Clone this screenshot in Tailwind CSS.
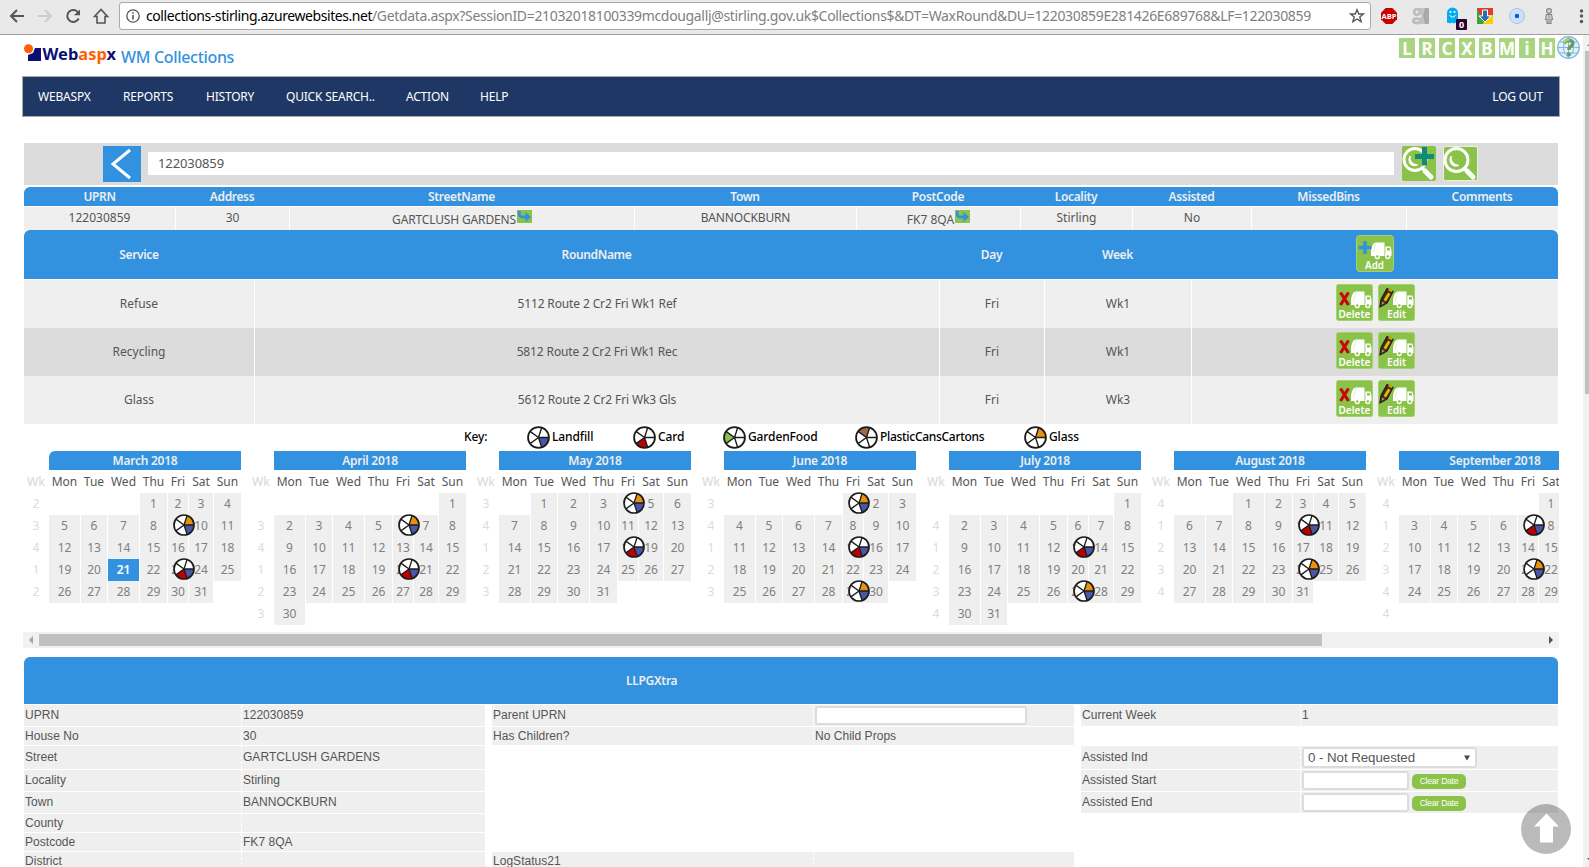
<!DOCTYPE html>
<html lang="en">
<head>
<meta charset="utf-8">
<title>WM Collections</title>
<script src="https://cdn.jsdelivr.net/npm/@tailwindcss/browser@4"></script>
</head>
<body class="w-[1589px] h-[867px] overflow-hidden bg-white text-[12px] text-[#555] font-['Noto_Sans',sans-serif] leading-none">
<svg width="0" height="0" class="absolute">
  <symbol id="truck" viewBox="0 0 21 18">
    <path d="M0 13V9C.5 4 2 1.500 4.500 .5H13.500V14H0Z" fill="#fff"/><path d="M14.300 4.500h5l1.200 4V14H14.300Z" fill="#fff"/><path d="M16 6h2.600l.7 2.500H16Z" fill="#8bc34a"/>
    <path d="M4.800 1.500L2.500 10" stroke="#c5e1a5" stroke-width=".6"/>
    <circle cx="6.300" cy="14.500" r="2" fill="#8bc34a" stroke="#fff" stroke-width="1.300"/><circle cx="16.800" cy="14.500" r="2" fill="#8bc34a" stroke="#fff" stroke-width="1.300"/>
  </symbol>
  <symbol id="delete" viewBox="0 0 37 37">
    <rect x=".5" y=".5" width="36" height="36" rx="2" fill="#8bc34a" stroke="#a5d271"/>
    <use href="#truck" x="15" y="7" width="21" height="18"/>
    <path d="M4.500 8.500L12.500 21M12.500 8.500L4.500 21" stroke="#c40808" stroke-width="3.200"/>
  </symbol>
  <symbol id="edit" viewBox="0 0 37 37">
    <rect x=".5" y=".5" width="36" height="36" rx="2" fill="#8bc34a" stroke="#a5d271"/>
    <use href="#truck" x="15" y="7" width="21" height="18"/>
    <path d="M9 4.500L15 7.500L9 19L2 23L3 15.500Z" fill="#3b2b0a" stroke="#222" stroke-width="1.200"/>
    <path d="M10 8.500L12.500 10L8 17.500L5.500 16Z" fill="#e8b413"/><path d="M10.500 5.500L14 7.300" stroke="#d89b10" stroke-width="2"/><path d="M4 17.500L7 19L3.500 21Z" fill="#c58a5a"/>
  </symbol>
  <symbol id="spokes" viewBox="0 0 22 22">
    <path d="M11 11H21M11 11L14.100 1.500M11 11L2.900 5.100M11 11L2.900 16.900M11 11L14.100 20.500" stroke="#1b1b1b" stroke-width="1.300"/>
    <circle cx="11" cy="11" r="10" fill="none" stroke="#1b1b1b" stroke-width="1.700"/>
  </symbol>
  <symbol id="p-blue" viewBox="0 0 22 22"><path d="M11 11H21A10 10 0 0 1 14.100 20.500Z" fill="#4a56a6"/></symbol>
  <symbol id="p-red" viewBox="0 0 22 22"><path d="M11 11L14.100 20.500A10 10 0 0 1 2.900 16.900Z" fill="#c00000"/></symbol>
  <symbol id="p-green" viewBox="0 0 22 22"><path d="M11 11L2.900 16.900A10 10 0 0 1 2.900 5.100Z" fill="#8bc34a"/></symbol>
  <symbol id="p-brown" viewBox="0 0 22 22"><path d="M11 11L2.900 5.100A10 10 0 0 1 14.100 1.500Z" fill="#a0694a"/></symbol>
  <symbol id="p-orange" viewBox="0 0 22 22"><path d="M11 11L14.100 1.500A10 10 0 0 1 21 11Z" fill="#e8920e"/></symbol>
  <symbol id="goto" viewBox="0 0 15 13"><rect width="15" height="13" fill="#8bc34a"/><path d="M2.300 1V4.500Q2.500 7 5.500 7H10" fill="none" stroke="#3292e0" stroke-width="2.800"/><path d="M8.500 2L14 7L8.500 12Z" fill="#3292e0"/></symbol>
</svg>

<!-- Browser toolbar -->
<header class="flex h-[35px] border-b border-[#9f9f9f] bg-[#e9e9e9]">
  <svg class="w-[119px] h-[34px] shrink-0" viewBox="0 0 119 34" fill="none" stroke="#555" stroke-width="2">
    <path d="M24 16H11.500M17 10L11 16L17 22"/>
    <path d="M38 16H50.500M45 10L51 16L45 22" stroke="#ccc"/>
    <path d="M78.500 13A6 6 0 1 0 78.700 18.500"/><path d="M80 9.500V15.300H74Z" fill="#555" stroke="none"/>
    <path d="M94.500 16.500L101 9.500L107.500 16.500H105V23H97V16.500Z" stroke-width="1.600"/>
  </svg>
  <div class="mt-[2px] flex h-[28px] w-[1252px] items-center rounded-[3px] border border-[#a9a9a9] bg-white">
    <svg class="ml-[6px] h-[14px] w-[14px] shrink-0" viewBox="0 0 14 14" fill="none" stroke="#555" stroke-width="1.300"><circle cx="7" cy="7" r="6.200"/><path d="M7 6v4.500M7 3.300v1.500" stroke-width="1.600"/></svg>
    <span class="ml-[6px] w-[226px] shrink-0 whitespace-nowrap text-[14px] tracking-[-0.43px] text-black">collections-stirling.azurewebsites.net</span>
    <span class="w-[977px] shrink-0 whitespace-nowrap text-[14px] tracking-[-0.34px] text-[#808080]">/Getdata.aspx?SessionID=21032018100339mcdougallj@stirling.gov.uk$Collections$&amp;DT=WaxRound&amp;DU=122030859E281426E689768&amp;LF=122030859</span>
    <svg class="h-[16px] w-[16px] shrink-0" viewBox="0 0 16 16" fill="none" stroke="#555" stroke-width="1.400"><path d="M8 1.800L9.800 6H14.400L10.800 9L12.100 13.600L8 11L3.900 13.600L5.200 9L1.600 6H6.200Z"/></svg>
  </div>
  <svg class="h-[34px] w-[218px] shrink-0" viewBox="1371 0 218 34">
    <path d="M1385.700 8h6.600l4.700 4.700v6.600l-4.700 4.700h-6.600l-4.700-4.700v-6.600Z" fill="#c70000"/><text x="1389" y="18.800" text-anchor="middle" font-size="7.500" font-weight="700" font-family="Open Sans" fill="#fff">ABP</text>
    <path d="M1421 8h7a1 1 0 0 1 1 1v14a1 1 0 0 1-1 1h-7Z" fill="#a9a9a9"/><path d="M1421 8h4l-2 8 2 8h-4Z" fill="#c4c4c4"/><g fill="none" stroke="#bdbdbd" stroke-width="2.800"><circle cx="1417" cy="12" r="2.800"/><ellipse cx="1417" cy="20.800" rx="3.800" ry="2.200"/></g><path d="M1418 9h3.500" stroke="#bdbdbd" stroke-width="1.800"/>
    <path d="M1447 23V13a5.500 5.500 0 0 1 11 0v8l1 2-3-.5-2 1-2-1-2 1-2-1Z" fill="#00aef0"/><circle cx="1450.500" cy="12" r="1.100" fill="#fff"/><circle cx="1454.500" cy="12" r="1.100" fill="#fff"/><path d="M1449.500 15a3.200 3.200 0 0 0 6 0" stroke="#fff" fill="none"/>
    <rect x="1456" y="19" width="11" height="11" rx="1" fill="#300030"/><text x="1461.500" y="28.300" text-anchor="middle" font-size="9" font-weight="700" font-family="Noto Sans" fill="#fff">0</text>
    <rect x="1477" y="8" width="16" height="16" fill="#ffce00"/><path d="M1477 24V8h1l8 8-3 8Z" fill="#3aa53c"/><path d="M1477 8h16v7h-13Z" fill="#e23b30"/><path d="M1482.500 10h5v6h3.500l-6 6-6-6h3.500Z" fill="#2d6cb5" stroke="#fff" stroke-width="1"/>
    <circle cx="1517" cy="16" r="7.500" fill="#cfdffa" stroke="#a8c3f2"/><circle cx="1517" cy="16" r="2.200" fill="#0a5bc4"/>
    <g fill="#d4d4d4" stroke="#888" stroke-width="1.200"><circle cx="1549" cy="11" r="2.400"/><path d="M1546.500 14.500h5l1 5h-1.500v4h-4v-4h-1.500Z"/></g><path d="M1549 15v8" stroke="#888"/>
    <g fill="#555"><circle cx="1581.500" cy="11" r="1.700"/><circle cx="1581.500" cy="16" r="1.700"/><circle cx="1581.500" cy="21.500" r="1.700"/></g>
  </svg>
</header>

<div class="flex h-[832px]">
<main class="w-[1583px] shrink-0 overflow-hidden">
  <!-- Branding and shortcut letters -->
  <div class="flex h-[41px] pl-[24px]">
    <svg class="mt-[9px] h-[22px] w-[97px] shrink-0" viewBox="0 0 97 22">
      <path d="M4 17V11L9 9L11 4H17V17Z" fill="#0a0f72"/><circle cx="4.500" cy="4.700" r="4.500" fill="#ff5f05"/>
      <text x="18.500" y="15.500" font-family="Noto Sans" font-weight="700" font-size="16.500" fill="#0a0f72" textLength="73.500" lengthAdjust="spacingAndGlyphs">Web<tspan fill="#ff5f05">asp</tspan>x</text>
    </svg>
    <h1 class="mt-[14px] whitespace-nowrap text-[16px] font-medium tracking-[-0.32px] text-[#3292e0]">WM Collections</h1>
    <div id="letters" class="ml-auto mr-[3px] mt-[3px] flex gap-[4px]"></div>
  </div>

  <nav class="ml-[22px] flex h-[41px] w-[1538px] items-center border border-[#a9a9a9] bg-[#1f3765] text-[12px] tracking-[-0.2px] text-white">
    <span class="ml-[15px] w-[85px]">WEBASPX</span><span class="w-[83px]">REPORTS</span><span class="w-[80px]">HISTORY</span><span class="w-[120px]">QUICK SEARCH..</span><span class="w-[74px]">ACTION</span><span>HELP</span><span class="ml-auto mr-[16px]">LOG OUT</span>
  </nav>

  <!-- Search -->
  <div class="ml-[24px] mt-[26px] flex h-[42px] w-[1534px] items-center bg-[#dcdcdc]">
    <svg class="ml-[79px] h-[36px] w-[38px] shrink-0" viewBox="0 0 38 36"><rect width="38" height="36" fill="#3292e0"/><path d="M27 4L10 18L27 32" fill="none" stroke="#fff" stroke-width="3"/></svg>
    <div class="ml-[7px] -mt-px flex h-[23px] w-[1246px] items-center bg-white pl-[10px] text-[13px] tracking-[-0.1px]">122030859</div>
    <svg class="ml-[8px] -mt-px h-[35px] w-[34px] shrink-0" viewBox="0 0 34 35"><rect width="34" height="35" rx="2" fill="#8bc34a"/><path d="M23 25L29 31" stroke="#fff" stroke-width="5" stroke-linecap="round"/><path d="M19.500 21.500L24 26" stroke="#fff" stroke-width="2.500"/><circle cx="13" cy="13.500" r="11" fill="none" stroke="#fff" stroke-width="3"/><path d="M8 10Q7.500 18 15.500 19Q9.500 21 7.500 17Q6 13 8 10Z" fill="#fff" stroke="#fff"/><path d="M13 10.500h19M22.500 1v18.500" stroke="#128a7a" stroke-width="5"/></svg>
    <svg class="ml-[7px] -mt-px h-[35px] w-[35px] shrink-0" viewBox="0 0 35 35"><rect x=".5" y=".5" width="34" height="34" rx="2" fill="#8bc34a" stroke="#fff" stroke-width=".7"/><path d="M24 25L30 31" stroke="#fff" stroke-width="5" stroke-linecap="round"/><path d="M20.500 21.500L24 26" stroke="#fff" stroke-width="2.500"/><circle cx="13.500" cy="14" r="11.500" fill="none" stroke="#fff" stroke-width="3"/><path d="M8 10Q7.500 18 16 19.500Q10 21.500 7.500 17Q6 13 8 10Z" fill="#fff" stroke="#fff"/></svg>
  </div>

  <!-- Property -->
  <section class="ml-[24px] mt-[2px] w-[1534px] text-center">
    <div class="grid h-[19px] grid-cols-[151px_114px_345px_222px_164px_112px_119px_155px_152px] items-center rounded-t-[6px] bg-[#3292e0] pt-px font-semibold tracking-[-0.35px] text-[#eee]">
      <span>UPRN</span><span>Address</span><span>StreetName</span><span>Town</span><span>PostCode</span><span>Locality</span><span>Assisted</span><span>MissedBins</span><span>Comments</span>
    </div>
    <div class="mt-px grid h-[21px] grid-cols-[151px_113px_344px_221px_163px_111px_118px_154px_151px] gap-x-px leading-[21px] *:bg-[#efefef]">
      <span>122030859</span><span>30</span>
      <span class="flex justify-center"><span class="pt-[2px] tracking-[-0.15px]">GARTCLUSH GARDENS</span><svg class="ml-px mt-[3px] h-[13px] w-[15px]"><use href="#goto"/></svg></span>
      <span class="tracking-[-0.15px]">BANNOCKBURN</span>
      <span class="flex justify-center"><span class="pt-[2px]">FK7 8QA</span><svg class="ml-px mt-[3px] h-[13px] w-[15px]"><use href="#goto"/></svg></span>
      <span>Stirling</span><span>No</span><span></span><span></span>
    </div>
  </section>

  <!-- Rounds -->
  <section class="ml-[24px] mt-[2px] w-[1534px] text-center">
    <div class="grid h-[49px] grid-cols-[230px_685px_105px_147px_367px] items-center rounded-t-[6px] bg-[#3292e0] pt-px font-semibold tracking-[-0.35px] text-[#eee]">
      <span>Service</span><span>RoundName</span><span>Day</span><span>Week</span>
      <svg class="mx-auto -mt-[3px] h-[37px] w-[38px]" viewBox="0 0 38 37"><rect x=".5" y=".5" width="37" height="36" rx="3" fill="#8bc34a" stroke="#a5d271"/><use href="#truck" x="15" y="7" width="21" height="18"/><path d="M2.500 12.500h13M9 6v13" stroke="#3292e0" stroke-width="3.500"/><text x="18.500" y="34" text-anchor="middle" textLength="19" lengthAdjust="spacingAndGlyphs" font-family="Noto Sans" font-weight="600" font-size="10" letter-spacing="0" fill="#fff">Add</text></svg>
    </div>
    <div id="rounds"></div>
  </section>

  <!-- Key -->
  <div id="key" class="flex h-[28px] items-center pl-[464px] font-medium tracking-[-0.12px] text-black"><span class="w-[63px]">Key:</span></div>

  <div id="months" class="ml-[24px] flex h-[181px] w-[1535px] overflow-hidden"></div>

  <div class="ml-[23px] flex h-[16px] w-[1536px] items-center bg-[#f1f1f1]">
    <svg class="h-[16px] w-[16px]" viewBox="0 0 16 16"><path d="M10 4V12L6 8Z" fill="#a3a3a3"/></svg>
    <div class="h-[12px] w-[1283px] bg-[#c1c1c1]"></div>
    <svg class="ml-auto h-[16px] w-[16px]" viewBox="0 0 16 16"><path d="M6 4V12L10 8Z" fill="#505050"/></svg>
  </div>

  <!-- Extra details -->
  <section class="ml-[24px] mt-[9px] w-[1534px]">
    <div class="flex h-[47px] items-center rounded-t-[6px] bg-[#3292e0] pl-[602px] pt-px font-semibold tracking-[-0.3px] text-[#eee]">LLPGXtra</div>
    <div id="extra" class="mt-px flex font-['Liberation_Sans',Arial,sans-serif] text-[12px] tracking-[0.03px]"></div>
  </section>
</main>

<!-- Page scrollbar -->
<div class="w-[6px] shrink-0 bg-[#f1f1f1] pl-[2px]">
  <svg class="h-[16px] w-[4px]" viewBox="0 0 4 16"><path d="M2 11L6 7V11Z" fill="#888"/></svg>
  <div class="h-[343px] bg-[#c1c1c1]"></div>
  <svg class="mt-[457px] h-[16px] w-[4px]" viewBox="0 0 4 16"><path d="M2 7H4V9Z" fill="#505050"/></svg>
</div>
</div>

<!-- Back to top -->
<svg class="fixed left-[1521px] top-[804px] h-[50px] w-[50px]" viewBox="0 0 50 50"><circle cx="25" cy="25" r="25" fill="#000" fill-opacity=".27"/><path d="M25.500 9.500L38 22.500H32V38.500H19V22.500H13Z" fill="#fff"/></svg>

<script>
const el = id => document.getElementById(id);
const pie = (...parts) => `<circle cx="11" cy="11" r="10.500" fill="#fff"/>${parts.map(p => `<use href="#p-${p}"/>`).join('')}<use href="#spokes"/>`;

el('letters').innerHTML = [...'LRCXBMiH'].map(c =>
  `<span class="flex h-[20px] w-[16px] items-center justify-center bg-[#aad580] text-[17px] font-bold text-white">${c}</span>`).join('') +
  `<svg class="-ml-[2px] -mt-[2px] h-[23px] w-[23px]" viewBox="0 0 23 23"><circle cx="11.500" cy="11.500" r="10.800" fill="#e4f1fa" stroke="#7db8e0" stroke-width="1.300"/><path d="M1 11.500h21M3 6h17M3 17h17M11.500 1v21M11.500 1Q1 11.500 11.500 22M11.500 1Q22 11.500 11.500 22" fill="none" stroke="#7db8e0"/><path d="M7 7.500Q8.500 4 12 4.300Q16.500 4.800 15.800 8Q15 10 12.800 11.300Q11.800 12.300 11.900 14M11.800 16.500v3.500" fill="none" stroke="#6f9a5d" stroke-width="3.400"/><path d="M6.800 6.800Q8.500 3.200 12.500 3.600" fill="none" stroke="#a6d47c" stroke-width="2.200"/></svg>`;

const btn = (kind, label, len) => `<svg class="h-[37px] w-[37px]" viewBox="0 0 37 37"><use href="#${kind}"/><text x="18.500" y="34" text-anchor="middle" textLength="${len}" lengthAdjust="spacingAndGlyphs" font-family="Noto Sans" font-weight="600" font-size="10" fill="#fff">${label}</text></svg>`;
el('rounds').innerHTML = [['Refuse','5112 Route 2 Cr2 Fri Wk1 Ref','Wk1'],['Recycling','5812 Route 2 Cr2 Fri Wk1 Rec','Wk1'],['Glass','5612 Route 2 Cr2 Fri Wk3 Gls','Wk3']].map(([s,r,w],i) =>
  `<div class="mt-px grid h-[47px] grid-cols-[230px_684px_104px_146px_366px] gap-x-px leading-[48px] ${i % 2 ? '*:bg-[#dcdcdc]' : '*:bg-[#efefef]'}"><span>${s}</span><span class="tracking-[-0.13px]">${r}</span><span>Fri</span><span>${w}</span><span class="flex justify-center gap-[5px] pt-[4px]">${btn('delete','Delete',32)}${btn('edit','Edit',19)}</span></div>`).join('');

el('key').innerHTML += [['Landfill','blue','w-[106px]'],['Card','red','w-[90px]'],['GardenFood','green','w-[132px]'],['PlasticCansCartons','brown','w-[169px] tracking-[-0.3px]'],['Glass','orange','w-[80px]']].map(([t,c,w]) =>
  `<span class="flex items-center gap-[2px] ${w}"><svg class="h-[23px] w-[23px] shrink-0" viewBox="0 0 22 22">${pie(c)}</svg>${t}</span>`).join('');

// Each month: name, weekday offset of day 1, number of days, week numbers, collections by day (g = glass + landfill, c = card + landfill)
const months = [
  ['March 2018',3,31,[2,3,4,1,2],{9:'g',23:'c'}],
  ['April 2018',6,30,['',3,4,1,2,3],{6:'g',20:'c'}],
  ['May 2018',1,31,[3,4,1,2,3],{4:'g',18:'c'}],
  ['June 2018',4,30,[3,4,1,2,3],{1:'g',15:'c',29:'g'}],
  ['July 2018',6,31,['',4,1,2,3,4],{13:'c',27:'g'}],
  ['August 2018',2,31,[4,1,2,3,4],{10:'c',24:'g'}],
  ['September 2018',5,30,[4,1,2,3,4,4],{7:'c',21:'g'}]];
const row = 'grid grid-cols-[24px_31px_26px_31px_27px_20px_24px_27px] gap-x-px text-center';
el('months').innerHTML = months.map(([name,off,n,wks,col],m) => {
  let h = `<div class="w-[225px] shrink-0"><div class="ml-[25px] h-[19px] w-[192px] bg-[#3292e0] text-center font-semibold leading-[19px] tracking-[-0.25px] text-[#eee] ${m ? '' : 'rounded-tl-[6px]'}">${name}</div>`;
  h += `<div class="${row} h-[23px] leading-[24px] *:whitespace-nowrap"><span class="text-[#dcdcdc] font-medium">Wk</span>${['Mon','Tue','Wed','Thu','Fri','Sat','Sun'].map(d => `<span>${d}</span>`).join('')}</div>`;
  wks.forEach((wk,r) => {
    h += `<div class="${row} mb-px h-[21px] leading-[22px] text-[#808080]"><span class="text-[#dcdcdc]">${wk}</span>`;
    for (let c = 0; c < 7; c++) {
      const d = r * 7 + c - off + 1;
      if (d < 1 || d > n) { h += '<span></span>'; continue; }
      const today = m === 0 && d === 21;
      const icon = col[d] ? `<svg class="absolute -top-px left-[5px] z-10 h-[22px] w-[22px]" viewBox="0 0 22 22">${col[d] === 'g' ? pie('orange','blue') : pie('red','blue')}</svg>` : '';
      h += `<span class="relative ${today ? 'bg-[#3292e0] font-semibold text-white' : 'bg-[#efefef]'}">${d}${icon}</span>`;
    }
    h += '</div>';
  });
  return h + '</div>';
}).join('');

const H = ['h-[21px]','h-[18px]','h-[23px]','h-[21px]','h-[21px]','h-[18px]','h-[18px]','h-[18px]'];
const box = w => `<span class="block h-[19px] rounded-[3px] border-2 border-[#dcdcdc] bg-white ${w}"></span>`;
const clear = '<span class="ml-[3px] mt-[2px] flex h-[15px] w-[54px] items-center justify-center rounded-[5px] bg-[#8bc34a] text-[8.500px] tracking-[-0.2px] text-white">Clear Date</span>';
const select = '<span class="flex h-[21px] w-[175px] items-center rounded-[3px] border-2 border-[#dcdcdc] bg-white pl-[4px] text-[13.300px] tracking-[-0.05px]">0 - Not Requested<svg class="ml-auto mr-[5px] h-[6px] w-[6px]" viewBox="0 0 7 6"><path d="M0 0H7L3.500 6Z" fill="#444"/></svg></span>';
const table = (rows, cls, kw) => `<div class="${cls}">${rows.map((r,i) => r
  ? `<div class="mb-px flex items-center bg-[#efefef] ${H[i]}"><span class="flex h-full items-center border-r border-dashed border-white pb-px pl-px ${kw}">${r[0]}</span><span class="flex items-center pl-[1px] ${r[1].startsWith('<') ? '' : 'pb-px'}">${r[1]}</span></div>`
  : `<div class="mb-px ${H[i]}"></div>`).join('')}</div>`;
el('extra').innerHTML =
  table([['UPRN','122030859'],['House No','30'],['Street','GARTCLUSH GARDENS'],['Locality','Stirling'],['Town','BANNOCKBURN'],['County',''],['Postcode','FK7 8QA'],['District','']], 'w-[461px]', 'w-[218px]') +
  table([['Parent UPRN', box('w-[212px]')],['Has Children?','No Child Props'],0,0,0,0,0,['LogStatus21','']], 'ml-[7px] w-[582px]', 'w-[322px]') +
  table([['Current Week','1'],0,['Assisted Ind',select],['Assisted Start',box('w-[107px]')+clear],['Assisted End',box('w-[107px]')+clear]], 'ml-[7px] w-[477px]', 'w-[220px]');
</script>
</body>
</html>
